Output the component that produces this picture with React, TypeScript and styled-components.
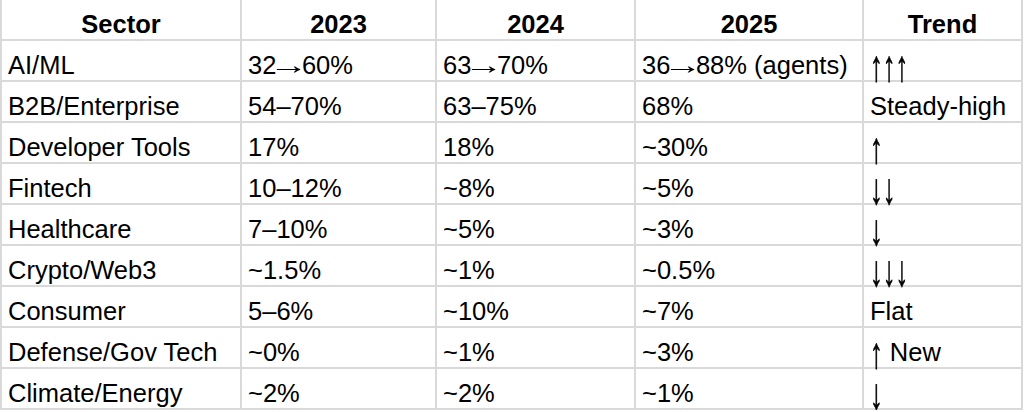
import React from "react";
import styled, { createGlobalStyle } from "styled-components";

const Global = createGlobalStyle`
  html, body { margin: 0; padding: 0; background: #ffffff; }
  body { font-family: "Liberation Sans", Arial, sans-serif; overflow: hidden; }
`;

const Grid = styled.div`
  display: grid;
  grid-template-columns: 238px 193px 197px 226px 157px;
  grid-auto-rows: 39px;
  gap: 2px;
  padding: 2px;
  margin-top: -2px;
  width: max-content;
  background: #d9d9d9;
`;

const Cell = styled.div<{ $head?: boolean }>`
  background: #ffffff;
  color: #000000;
  font-size: 25.5px;
  line-height: 29px;
  font-weight: ${(p) => (p.$head ? 700 : 400)};
  padding: 0 6px;
  display: flex;
  align-items: flex-end;
  justify-content: ${(p) => (p.$head ? "center" : "flex-start")};
  white-space: pre;
`;

const Text = styled.span`
  display: block;
`;

const Arrow = styled.span<{ $dir: "h" | "v" }>`
  display: inline-block;
  color: #000000;
  filter: grayscale(1);
  transform-origin: center;
  -webkit-text-stroke: ${(p) => (p.$dir === "v" ? "0.4px #000000" : "0")};
  transform: ${(p) =>
    p.$dir === "v" ? "translateY(1px) scaleY(1.7)" : "scaleX(1.55)"};
`;

const renderText = (s: string) =>
  Array.from(s).map((ch, k) =>
    ch === "→" ? (
      <Arrow key={k} $dir="h">
        {ch}
      </Arrow>
    ) : ch === "↑" || ch === "↓" ? (
      <Arrow key={k} $dir="v">
        {ch}
      </Arrow>
    ) : (
      ch
    )
  );

const headers = ["Sector", "2023", "2024", "2025", "Trend"];

const rows: string[][] = [
  ["AI/ML", "32→60%", "63→70%", "36→88% (agents)", "↑↑↑"],
  ["B2B/Enterprise", "54–70%", "63–75%", "68%", "Steady-high"],
  ["Developer Tools", "17%", "18%", "~30%", "↑"],
  ["Fintech", "10–12%", "~8%", "~5%", "↓↓"],
  ["Healthcare", "7–10%", "~5%", "~3%", "↓"],
  ["Crypto/Web3", "~1.5%", "~1%", "~0.5%", "↓↓↓"],
  ["Consumer", "5–6%", "~10%", "~7%", "Flat"],
  ["Defense/Gov Tech", "~0%", "~1%", "~3%", "↑ New"],
  ["Climate/Energy", "~2%", "~2%", "~1%", "↓"],
];

export default function App() {
  return (
    <>
      <Global />
      <Grid>
        {headers.map((h) => (
          <Cell key={h} $head>
            <Text>{h}</Text>
          </Cell>
        ))}
        {rows.map((r, i) =>
          r.map((c, j) => (
            <Cell key={`${i}-${j}`}>
              <Text>{renderText(c)}</Text>
            </Cell>
          ))
        )}
      </Grid>
    </>
  );
}
